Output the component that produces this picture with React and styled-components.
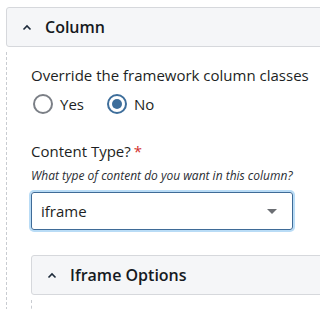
import React from 'react'
import styled, { createGlobalStyle } from 'styled-components'

const Global = createGlobalStyle`
  body {
    margin: 0;
    background: #fff;
    font-family: 'Open Sans', 'Liberation Sans', sans-serif;
    color: #1d1f24;
  }
`

const Page = styled.div`
  padding: 7px 0 0 6px;
  width: 314px;
  height: 302px;
  overflow: hidden;
`

const Panel = styled.section`
  display: flex;
  flex-direction: column;
`

const PanelHead = styled.div`
  display: flex;
  align-items: center;
  gap: 13px;
  height: 38px;
  margin-right: -10px;
  padding-left: 15px;
  background: #f5f6f8;
  border: 1px solid #d6d8dc;
  border-radius: 3px 0 0 3px;
  font-size: 16px;
  font-weight: 600;
  color: #151a22;
`

const PanelBody = styled.div`
  display: flex;
  flex-direction: column;
  margin-top: 5px;
  padding: 13px 0 0 24px;
  border-left: 1px dashed #c9ccd1;
`

const Label = styled.div`
  font-size: 15px;
  line-height: 20px;
  color: #1d1f24;
`

const Req = styled.span`
  color: #d32f2f;
  margin-left: 3px;
`

const Help = styled.div`
  font-size: 12px;
  font-style: italic;
  color: #2a2d33;
  line-height: 16px;
  margin-top: 7px;
`

const Radios = styled.div`
  display: flex;
  align-items: center;
  gap: 23px;
  margin: 9px 0 0 2px;
`

const RadioItem = styled.label`
  display: flex;
  align-items: center;
  gap: 7px;
  font-size: 15px;
`

const Circle = styled.span`
  box-sizing: border-box;
  width: 20px;
  height: 20px;
  border-radius: 50%;
  border: 2px solid ${(p) => (p.checked ? '#3e6e9b' : '#7b7f86')};
  display: flex;
  align-items: center;
  justify-content: center;
  &::after {
    content: '';
    display: ${(p) => (p.checked ? 'block' : 'none')};
    width: 10px;
    height: 10px;
    border-radius: 50%;
    background: #3e6e9b;
  }
`

const Field = styled.div`
  display: flex;
  flex-direction: column;
  margin-top: ${(p) => p.top || 0}px;
`

const Select = styled.div`
  box-sizing: border-box;
  display: flex;
  align-items: center;
  justify-content: space-between;
  width: 262px;
  height: 38px;
  margin-top: 8px;
  padding: 0 15px 0 9px;
  border: 1px solid #3f6b97;
  border-radius: 3px;
  box-shadow: 0 0 0 2px #b9dcf6;
  font-size: 15px;
`

const Caret = styled.span`
  width: 0;
  height: 0;
  border-left: 5px solid transparent;
  border-right: 5px solid transparent;
  border-top: 5px solid #6b6e73;
`

const SubPanel = styled.div`
  display: flex;
  flex-direction: column;
  margin-top: 25px;
`

const SubBody = styled.div`
  height: 20px;
  margin-top: 5px;
  border-left: 1px dashed #c9ccd1;
`

const Chevron = () => (
  <svg width='10' height='7' viewBox='0 0 10 7' fill='none'>
    <path d='M1.5 5.5 L5 2 L8.5 5.5' stroke='#1d2a3a' strokeWidth='1.6' />
  </svg>
)

const App = () => {
  return (
    <Page>
      <Global />
      <Panel>
        <PanelHead>
          <Chevron />
          Column
        </PanelHead>
        <PanelBody>
          <Field>
            <Label>Override the framework column classes</Label>
            <Radios>
              <RadioItem>
                <Circle />
                Yes
              </RadioItem>
              <RadioItem>
                <Circle checked />
                No
              </RadioItem>
            </Radios>
          </Field>
          <Field top={27}>
            <Label>
              Content Type?<Req>*</Req>
            </Label>
            <Help>What type of content do you want in this column?</Help>
            <Select>
              iframe
              <Caret />
            </Select>
          </Field>
          <SubPanel>
            <PanelHead>
              <Chevron />
              Iframe Options
            </PanelHead>
            <SubBody />
          </SubPanel>
        </PanelBody>
      </Panel>
    </Page>
  )
}

export default App
